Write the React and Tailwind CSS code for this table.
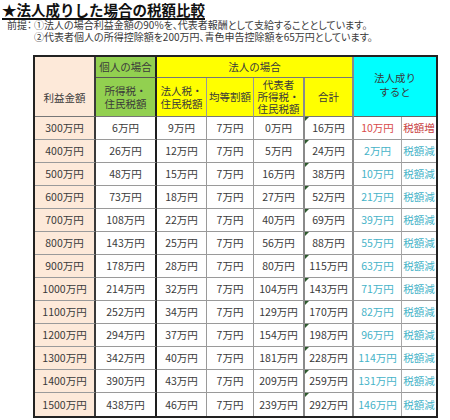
const rows = [
  [300, 6, 9, 7, 0, 16, 10, true],
  [400, 26, 12, 7, 5, 24, 2],
  [500, 48, 15, 7, 16, 38, 10],
  [600, 73, 18, 7, 27, 52, 21],
  [700, 108, 22, 7, 40, 69, 39],
  [800, 143, 25, 7, 56, 88, 55],
  [900, 178, 28, 7, 80, 115, 63],
  [1000, 214, 32, 7, 104, 143, 71],
  [1100, 252, 34, 7, 129, 170, 82],
  [1200, 294, 37, 7, 154, 198, 96],
  [1300, 342, 40, 7, 181, 228, 114],
  [1400, 390, 43, 7, 209, 259, 131],
  [1500, 438, 46, 7, 239, 292, 146],
];

// right border of each column
const colR = [
  'border-r-2 border-r-[#3a3a3a]',
  'border-r-2 border-r-[#1e1e1e]',
  'border-r border-r-[#9a9a9a]',
  'border-r border-r-[#9a9a9a]',
  'border-r-2 border-r-[#8a8a8a]',
  'border-r-2 border-r-[#8a8a8a]',
  'border-r border-r-[#a8a8a8]',
  '',
];

const cell = 'flex items-center justify-center text-center leading-[12px]';

export default function App() {
  return (
    <div className="w-[450px] h-[420px] bg-white text-[#3a3a3a] [font-family:'Noto_Sans_CJK_JP',sans-serif] overflow-hidden">
      <h1 className="pl-[2px] text-[14.5px] leading-[19px] font-bold text-[#111] underline underline-offset-[2px] decoration-[1.5px]">
        ★法人成りした場合の税額比較
      </h1>
      <div className="text-[10px] leading-[12px] [font-feature-settings:'palt']">
        <div className="flex">
          <span className="w-[34px] pl-[7px]">前提：</span>
          <span>①法人の場合利益金額の90%を、代表者報酬として支給することとしています。</span>
        </div>
        <div className="pl-[34px]">②代表者個人の所得控除額を200万円、青色申告控除額を65万円としています。</div>
      </div>

      <div className="ml-[33px] mt-[12px] w-fit border-2 border-[#222] text-[10.5px]">
        <div className="grid grid-cols-[61px_61px_50px_47px_51px_49px_48px_34px] grid-rows-[21px_39px_repeat(13,23px)]">
          {/* header row 1 */}
          <div className={`bg-[#fde9d9] ${colR[0]}`} />
          <div className={`${cell} bg-[#92d050] ${colR[1]} border-b border-b-[#555]`}>個人の場合</div>
          <div className={`${cell} col-span-4 bg-[#ffff00] ${colR[5]} border-b border-b-[#777]`}>法人の場合</div>
          <div className={`${cell} col-span-2 row-span-2 bg-[#00ffff] border-b border-b-[#666] flex-col pb-[4px] leading-[14px]`}>
            <span>法人成り</span>
            <span>すると</span>
          </div>

          {/* header row 2 */}
          <div className={`${cell} bg-[#fde9d9] ${colR[0]} border-b border-b-[#777] pt-[2px]`}>利益金額</div>
          <div className={`${cell} bg-[#92d050] ${colR[1]} border-b border-b-[#777] leading-[13px]`}>所得税・<br />住民税額</div>
          <div className={`${cell} bg-[#ffff00] ${colR[2]} border-b border-b-[#777] leading-[13px]`}>法人税・<br />住民税額</div>
          <div className={`${cell} bg-[#ffff00] ${colR[3]} border-b border-b-[#777]`}>均等割額</div>
          <div className={`${cell} bg-[#ffff00] ${colR[4]} border-b border-b-[#777] leading-[12.5px]`}>代表者<br />所得税・<br />住民税額</div>
          <div className={`${cell} bg-[#ffff00] ${colR[5]} border-b border-b-[#777]`}>合計</div>

          {/* data */}
          {rows.map((r, i) => {
            const last = i === rows.length - 1;
            const b = last ? '' : 'border-b border-b-[#9a9a9a]';
            const up = r[7];
            return [
              <div key={`a${i}`} className={`${cell} bg-[#fde9d9] ${colR[0]} ${b}`}>{r[0]}万円</div>,
              <div key={`b${i}`} className={`${cell} ${colR[1]} ${b}`}>{r[1]}万円</div>,
              <div key={`c${i}`} className={`${cell} ${colR[2]} ${b}`}>{r[2]}万円</div>,
              <div key={`d${i}`} className={`${cell} ${colR[3]} ${b}`}>{r[3]}万円</div>,
              <div key={`e${i}`} className={`${cell} ${colR[4]} ${b}`}>{r[4]}万円</div>,
              <div key={`f${i}`} className={`${cell} relative ${colR[5]} ${b}`}>
                <span className="absolute left-0 top-0 w-0 h-0 border-t-[4px] border-r-[4px] border-t-[#2e5a2e] border-r-transparent" />
                {r[5]}万円
              </div>,
              <div key={`g${i}`} className={`${cell} ${colR[6]} ${b} ${up ? 'text-[#d84a4a]' : 'text-[#45b3c8]'}`}>{r[6]}万円</div>,
              <div key={`h${i}`} className={`${cell} ${b} ${up ? 'text-[#c84040]' : 'text-[#45b3c8]'}`}>{up ? '税額増' : '税額減'}</div>,
            ];
          })}
        </div>
      </div>
    </div>
  );
}
